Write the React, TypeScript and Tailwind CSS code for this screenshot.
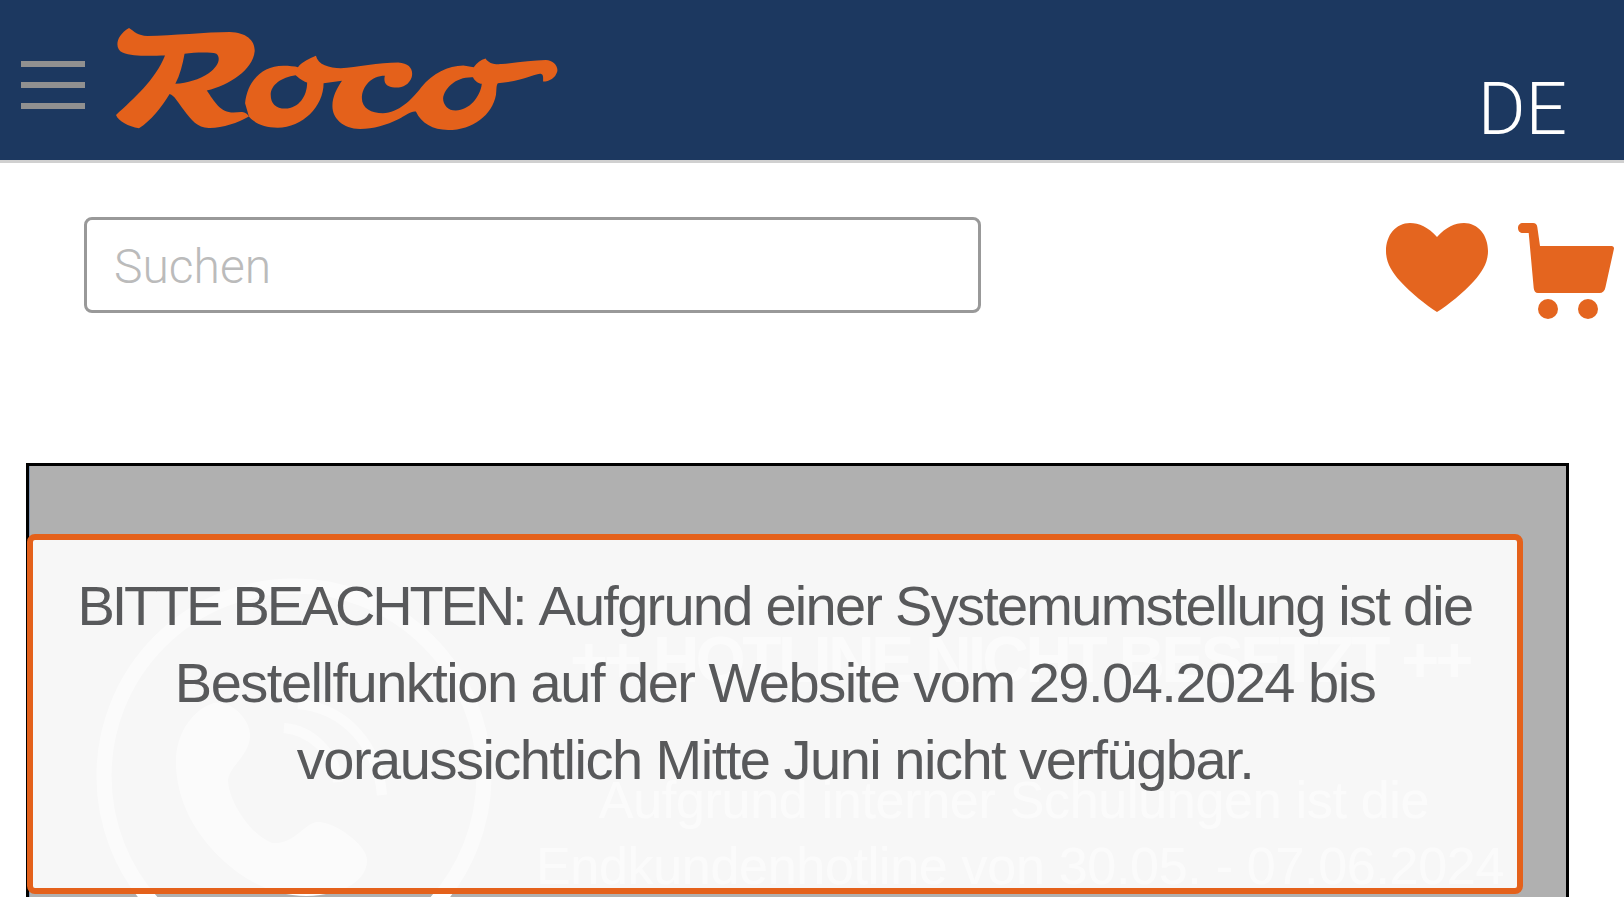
export default function App() {
  return (
    <div className="h-[897px] w-[1624px] overflow-hidden bg-white font-['Liberation_Sans',Arial,sans-serif]">
      <header className="flex h-[163px] items-start border-b-[3px] border-[#d0d0d0] bg-[#1c3860]">
        <div className="ml-[21px] mt-[61px] flex w-[64px] flex-col gap-[15px]">
          <div className="h-[6px] bg-[#909090]" />
          <div className="h-[6px] bg-[#909090]" />
          <div className="h-[6px] bg-[#909090]" />
        </div>
        <svg className="ml-[31px] mt-[28px]" width="442" height="102" viewBox="303 85 1154 305" preserveAspectRatio="none">
          <path
            fill="#e4611b"
            fillRule="evenodd"
            d="M337 85C350 95 360 108 385 109C450 108 540 97 600 97C645 98 667 125 665 155C660 210 600 255 540 272C560 305 575 338 610 338C625 338 640 330 650 350C620 370 580 385 545 384C515 383 500 360 480 330C465 308 455 285 443 282C420 325 395 360 363 385C335 378 310 365 303 345C350 295 405 240 431 167C400 167 350 172 320 158C300 148 300 110 337 85ZM482 162C510 158 550 157 565 162C578 175 570 200 545 220C520 240 490 248 458 252C470 225 477 195 482 162Z"
          />
          <path
            fill="#e4611b"
            fillRule="evenodd"
            d="M640 310C645 250 680 198 740 198C755 198 770 200 778 202C790 185 810 175 825 168C830 195 860 205 890 205C930 203 990 188 1040 188C1070 190 1080 210 1075 232C1068 255 1050 265 1030 263C1010 262 1000 250 1005 228C970 228 945 260 945 295C945 325 970 340 1000 340C1040 338 1075 300 1100 262C1130 220 1170 198 1210 197L1237 202C1245 190 1255 180 1268 176C1275 190 1290 195 1310 193C1350 188 1390 182 1425 181C1445 182 1458 200 1455 215C1450 235 1435 245 1418 245C1418 235 1420 222 1410 222C1390 225 1360 245 1300 250C1295 258 1297 270 1295 285C1285 345 1235 390 1170 390C1130 390 1100 370 1086 335C1075 332 1060 345 1040 358C1010 375 975 387 940 387C895 385 868 355 868 318C868 290 880 265 893 243L845 250C845 320 790 382 725 383C690 383 665 370 650 350ZM772 226C785 240 795 245 802 248C802 290 780 325 745 326C720 326 707 310 707 285C707 255 735 232 772 226ZM1235 232C1240 245 1250 250 1258 252C1255 290 1225 332 1190 332C1170 332 1157 315 1157 295C1160 265 1190 230 1235 232Z"
          />
        </svg>
        <div className="ml-auto mr-[57px] mt-[69px] font-['Roboto',sans-serif] text-[73px] font-light leading-[80px] text-white">DE</div>
      </header>

      <div className="flex h-[300px] items-start">
        <input
          placeholder="Suchen"
          className="ml-[84px] mt-[54px] h-[96px] w-[897px] rounded-[8px] border-[3px] border-[#999999] bg-white px-[27px] pt-[2px] font-['Roboto',sans-serif] text-[48px] font-light outline-none placeholder:text-[#bbbbbb]"
        />
        <svg className="ml-[405px] mt-[60px]" width="102" height="89" viewBox="0 0 102 89">
          <path
            fill="#e4651f"
            d="M51 14C42 4 33 0 24 0C10 0 0 12 0 28C0 40 6 49 14 58C25 70 40 82 51 89C62 82 77 70 88 58C96 49 102 40 102 28C102 12 92 0 78 0C69 0 60 4 51 14Z"
          />
        </svg>
        <svg className="ml-[30px] mt-[60px]" width="96" height="96" viewBox="0 0 96 96">
          <path
            fill="#e4651f"
            d="M5 0H15C17.500 0 19 1.500 19.300 4L22 23H93.500C95.500 23 96.300 24.500 95.900 26L87.500 64C86.800 68 84.500 70 81.500 70H20C17.500 70 16 68 15.700 65L10.700 10H5C2 10 0 8 0 5C0 2 2 0 5 0Z"
          />
          <circle cx="30" cy="86" r="10" fill="#e4651f" />
          <circle cx="70" cy="86" r="10" fill="#e4651f" />
        </svg>
      </div>

      <section className="relative ml-[26px] flex h-[600px] w-[1543px] items-start border-[3px] border-black bg-[#b0b0b0] pl-[67px] pt-[112px] shadow-[inset_1px_0_0_#7f93ad]">
        <svg className="shrink-0" width="396" height="396" viewBox="96 578 396 396" fill="none">
          <circle cx="294" cy="776" r="190" stroke="white" strokeWidth="15" />
          <path
            fill="white"
            d="M214 703C196 708 176 730 176 762C176 800 195 835 225 862C250 885 285 900 320 895C345 892 367 880 367 860C367 845 335 822 318 822C305 822 295 845 272 843C250 835 228 800 228 780C230 765 250 755 250 735C250 720 232 700 214 703Z"
          />
          <path stroke="white" strokeWidth="10" d="M284 728C310 730 335 752 338 782" />
          <path stroke="white" strokeWidth="10" d="M298 704C345 708 378 745 382 795" />
        </svg>
        <div className="ml-[28px] w-[1000px] shrink-0 text-center text-white">
          <div className="mt-[44px] whitespace-nowrap text-[64px] font-bold leading-[76px] tracking-[-3.3px]">++ HOTLINE NICHT BESETZT ++</div>
          <p className="mt-[69px] whitespace-nowrap pr-[12px] text-[52px] leading-[66px] tracking-[-0.3px]">Aufgrund interner Schulungen ist die</p>
          <p className="whitespace-nowrap text-[52px] leading-[66px] tracking-[-0.3px]">Endkundenhotline von 30.05. - 07.06.2024</p>
        </div>

        <div className="absolute left-[-2px] top-[68px] h-[360px] w-[1496px] rounded-[8px] border-[6px] border-[#e4611b] bg-[#fbfbfb]/95 pt-[27px] text-center text-[56px] leading-[77px] tracking-[-1.5px] text-[#58595b]">
          <span className="tracking-[-3.2px]">BITTE BEACHTEN:</span> <span className="tracking-[-1.75px]">Aufgrund einer Systemumstellung ist die</span>
          <br />
          Bestellfunktion auf der Website vom 29.04.2024 bis
          <br />
          voraussichtlich Mitte Juni nicht verfügbar.
        </div>
      </section>
    </div>
  );
}
